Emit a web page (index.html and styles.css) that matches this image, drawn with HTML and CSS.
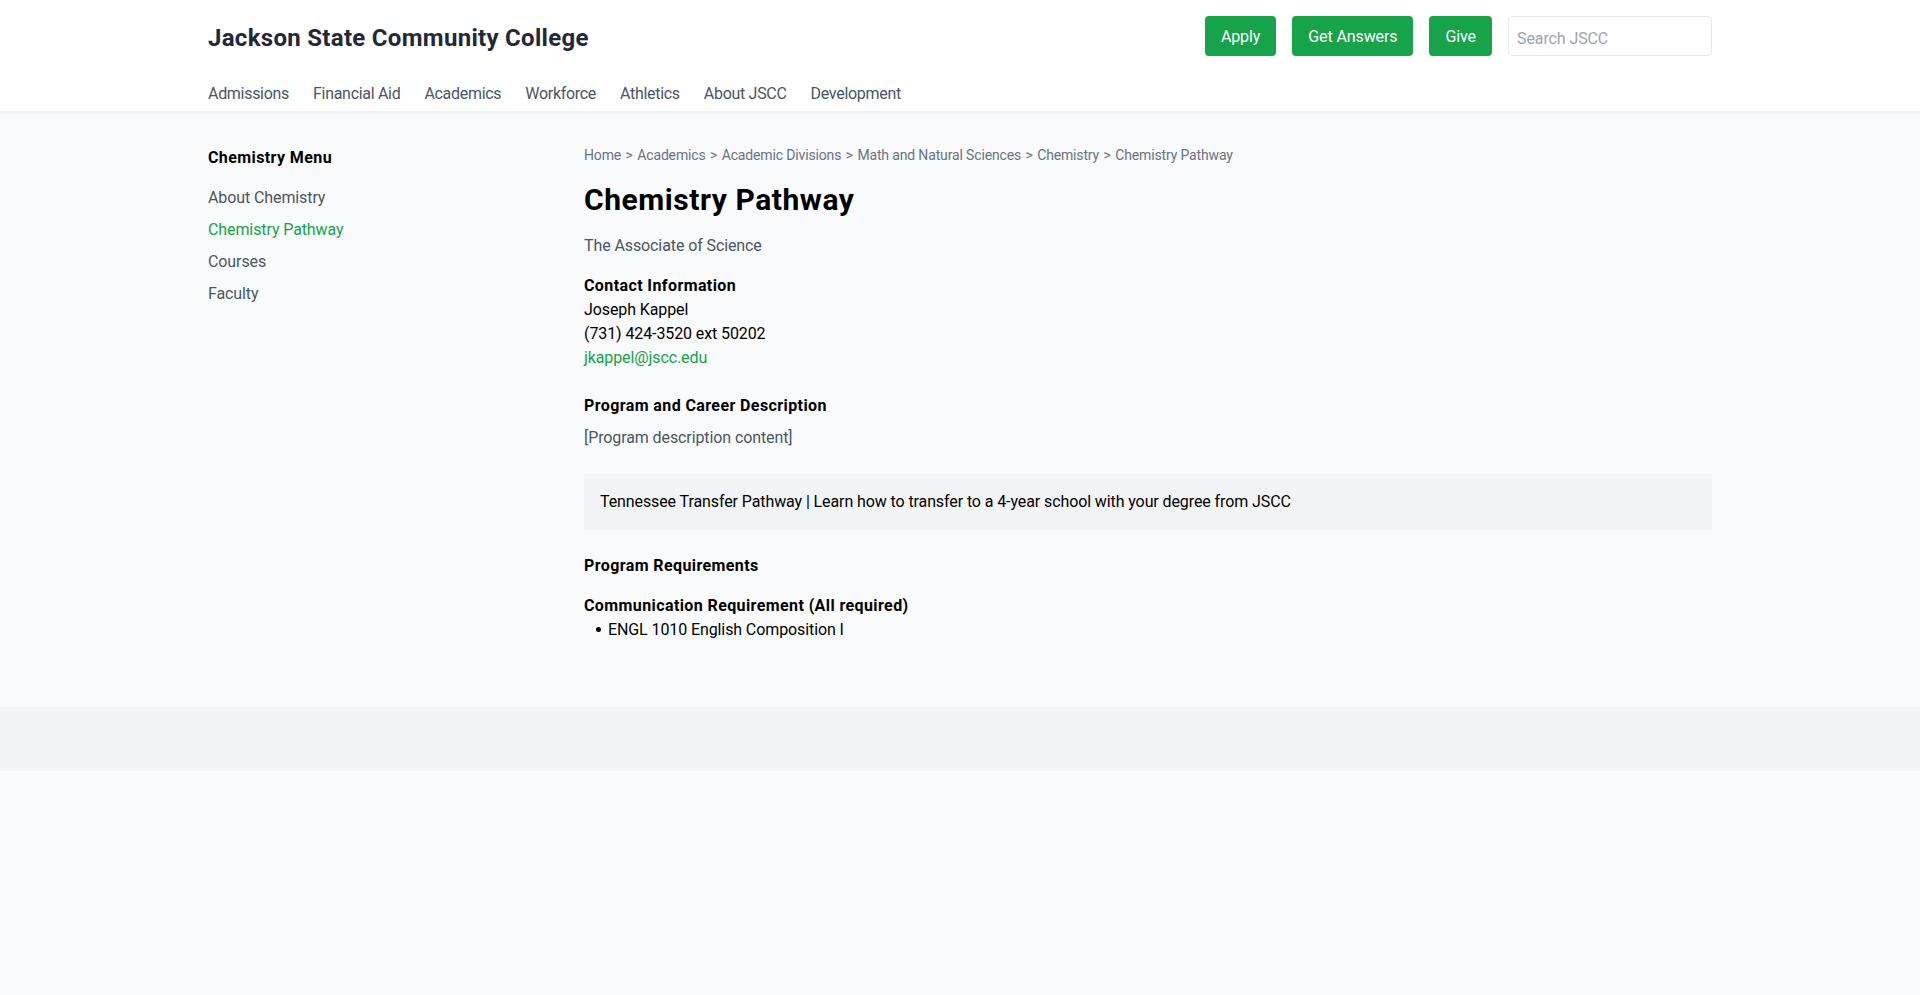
FILE: index.html
```html
<!DOCTYPE html>
<html lang="en">
<head>
<meta charset="utf-8">
<title>Chemistry Pathway - Jackson State Community College</title>
<link rel="stylesheet" href="styles.css">
</head>
<body>
<header class="site-header">
  <div class="container">
    <div class="top-row">
      <a class="brand" href="#">Jackson State Community College</a>
      <div class="actions">
        <a class="btn" href="#">Apply</a>
        <a class="btn" href="#">Get Answers</a>
        <a class="btn" href="#">Give</a>
        <input class="search" type="text" placeholder="Search JSCC">
      </div>
    </div>
    <nav class="main-nav">
      <a href="#">Admissions</a>
      <a href="#">Financial Aid</a>
      <a href="#">Academics</a>
      <a href="#">Workforce</a>
      <a href="#">Athletics</a>
      <a href="#">About JSCC</a>
      <a href="#">Development</a>
    </nav>
  </div>
</header>

<main class="container page">
  <aside class="sidebar">
    <h2 class="side-title">Chemistry Menu</h2>
    <ul class="side-menu">
      <li><a href="#">About Chemistry</a></li>
      <li><a href="#" class="active">Chemistry Pathway</a></li>
      <li><a href="#">Courses</a></li>
      <li><a href="#">Faculty</a></li>
    </ul>
  </aside>
  <article class="content">
    <div class="breadcrumb">
      <a href="#">Home</a><span class="sep">&gt;</span><a href="#">Academics</a><span class="sep">&gt;</span><a href="#">Academic Divisions</a><span class="sep">&gt;</span><a href="#">Math and Natural Sciences</a><span class="sep">&gt;</span><a href="#">Chemistry</a><span class="sep">&gt;</span><span>Chemistry Pathway</span>
    </div>
    <h1 class="title">Chemistry Pathway</h1>
    <p class="subtitle">The Associate of Science</p>

    <div class="contact">
      <h3 class="label">Contact Information</h3>
      <p>Joseph Kappel</p>
      <p>(731) 424-3520 ext 50202</p>
      <p><a href="#" class="green">jkappel@jscc.edu</a></p>
    </div>

    <h3 class="label mb-2">Program and Career Description</h3>
    <p class="muted mb-6">[Program description content]</p>

    <div class="note">Tennessee Transfer Pathway | Learn how to transfer to a 4-year school with your degree from JSCC</div>

    <h3 class="label mb-4">Program Requirements</h3>
    <h4 class="label">Communication Requirement (All required)</h4>
    <ul class="req-list">
      <li>ENGL 1010 English Composition I</li>
    </ul>
  </article>
</main>

<footer class="site-footer"></footer>
</body>
</html>
```

FILE: styles.css
```css
* { box-sizing: border-box; }
html, body { margin: 0; padding: 0; }
body {
  background: #f9fafb;
  font-family: Roboto, "Open Sans", "Liberation Sans", sans-serif;
  font-size: 16px;
  line-height: 24px;
  letter-spacing: -0.1px;
  color: #000;
}
a { text-decoration: none; color: inherit; }
h1, h2, h3, h4, p, ul { margin: 0; padding: 0; }

.container {
  max-width: 1536px;
  margin: 0 auto;
  padding: 0 16px;
}

.site-header {
  background: #fff;
  box-shadow: 0 1px 2px rgba(0,0,0,0.05);
  border-bottom: 1px solid #f0f1f3;
}
.top-row {
  display: flex;
  justify-content: space-between;
  align-items: center;
  padding: 16px 0;
}
.brand {
  font-size: 24px;
  line-height: 32px;
  font-weight: 700;
  letter-spacing: 0.3px;
  color: #1f2937;
  padding-top: 4px;
}
.actions {
  display: flex;
  align-items: center;
  gap: 16px;
}
.btn {
  display: block;
  background: #16a34a;
  color: #fff;
  padding: 9px 16px 7px;
  border-radius: 4px;
  font-size: 16px;
  line-height: 24px;
}
.search {
  width: 204px;
  height: 40px;
  padding: 10px 8px 6px;
  border: 1px solid #e5e7eb;
  border-radius: 4px;
  font-family: inherit;
  font-size: 16px;
  letter-spacing: -0.1px;
  background: #fff;
}
.search::placeholder { color: #9ca3af; }

.main-nav {
  display: flex;
  gap: 24px;
  padding: 10px 0 5px;
  letter-spacing: -0.3px;
}
.main-nav a { color: #4b5563; }

.page {
  display: flex;
  padding-top: 33px;
  padding-bottom: 65px;
}
.sidebar { width: 25%; flex: none; padding-top: 1px; }
.content { width: 75%; flex: none; }

.side-title {
  font-size: 16px;
  line-height: 24px;
  font-weight: 700;
  letter-spacing: 0.4px;
  margin-bottom: 16px;
}
.side-menu { list-style: none; display: flex; flex-direction: column; gap: 8px; }
.side-menu a { color: #4b5563; }
.side-menu a.active { color: #16a34a; }

.breadcrumb {
  font-size: 14px;
  line-height: 20px;
  color: #6b7280;
  letter-spacing: -0.15px;
  margin-bottom: 16px;
}
.breadcrumb .sep { padding: 0 4.5px; }

.title {
  font-size: 30px;
  line-height: 36px;
  font-weight: 700;
  letter-spacing: 0.55px;
  margin-bottom: 16px;
  padding-top: 1px;
}
.subtitle { color: #4b5563; margin-bottom: 16px; }
.contact { margin-bottom: 24px; }
.label { font-size: 16px; line-height: 24px; font-weight: 700; letter-spacing: 0.4px; }
.green { color: #16a34a; }
.muted { color: #4b5563; }
.mb-2 { margin-bottom: 8px; }
.mb-4 { margin-bottom: 16px; }
.mb-6 { margin-bottom: 24px; }

.note {
  background: #f3f4f6;
  padding: 16px;
  margin-bottom: 24px;
}

.req-list {
  list-style: none;
  margin-left: 12px;
}
.req-list li::before {
  content: "";
  display: inline-block;
  width: 5px;
  height: 5px;
  border-radius: 50%;
  background: #000;
  vertical-align: middle;
  margin-right: 7px;
  position: relative;
  top: -1px;
}

.site-footer {
  background: #f3f4f6;
  height: 64px;
}
```
